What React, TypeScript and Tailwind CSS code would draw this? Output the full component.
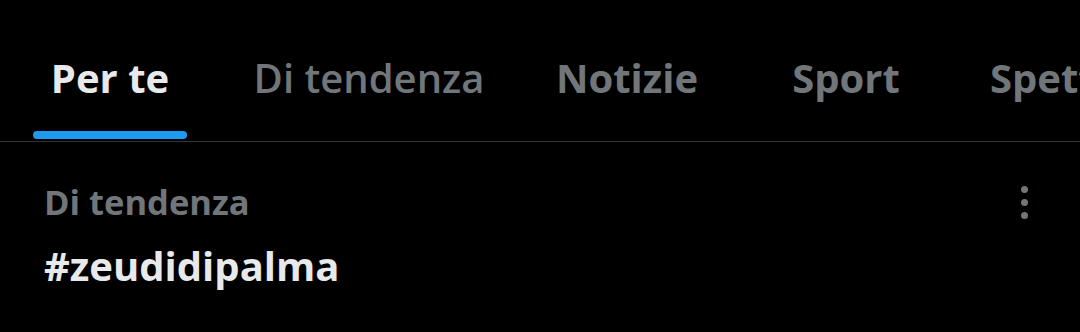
const tabs = [
  { label: "Per te", width: "w-[220px] justify-center", active: true, weight: "font-bold" },
  { label: "Di tendenza", width: "w-[298px] justify-center", active: false, weight: "font-semibold" },
  { label: "Notizie", width: "w-[218px] justify-center", active: false, weight: "font-bold" },
  { label: "Sport", width: "w-[220px] justify-center", active: false, weight: "font-bold" },
  { label: "Spettacolo", width: "w-[260px] justify-start pl-[34px]", active: false, weight: "font-bold" },
];

export default function App() {
  return (
    <div
      className="h-[332px] w-[1080px] overflow-hidden bg-black"
      style={{ fontFamily: "'Open Sans', 'Noto Sans', sans-serif" }}
    >
      {/* Tab bar */}
      <div className="flex h-[142px] border-b border-[#2f3336]">
        {tabs.map((tab) => (
          <div
            key={tab.label}
            className={`relative flex shrink-0 pt-[52px] ${tab.width}`}
          >
            <span
              className={`whitespace-nowrap text-[40px] leading-[52px] ${tab.weight} ${
                tab.active ? "text-[#e7e9ea]" : "text-[#71767b]"
              }`}
            >
              {tab.label}
            </span>
            {tab.active && (
              <div className="absolute bottom-[2px] left-[33px] h-[8px] w-[154px] rounded-full bg-[#1d9bf0]" />
            )}
          </div>
        ))}
      </div>

      {/* Trend item */}
      <div className="flex items-start justify-between pl-[44px] pr-[52px] pt-[36px]">
        <div className="flex flex-col">
          <span className="text-[34.5px] font-bold leading-[48px] text-[#71767b]">
            Di tendenza
          </span>
          <span className="mt-[16px] text-[40px] font-bold leading-[48px] text-[#e7e9ea]">
            #zeudidipalma
          </span>
        </div>
        <div className="mt-[8px] flex flex-col items-center gap-[6px]">
          <span className="h-[7px] w-[7px] rounded-full bg-[#71767b]" />
          <span className="h-[7px] w-[7px] rounded-full bg-[#71767b]" />
          <span className="h-[7px] w-[7px] rounded-full bg-[#71767b]" />
        </div>
      </div>
    </div>
  );
}
